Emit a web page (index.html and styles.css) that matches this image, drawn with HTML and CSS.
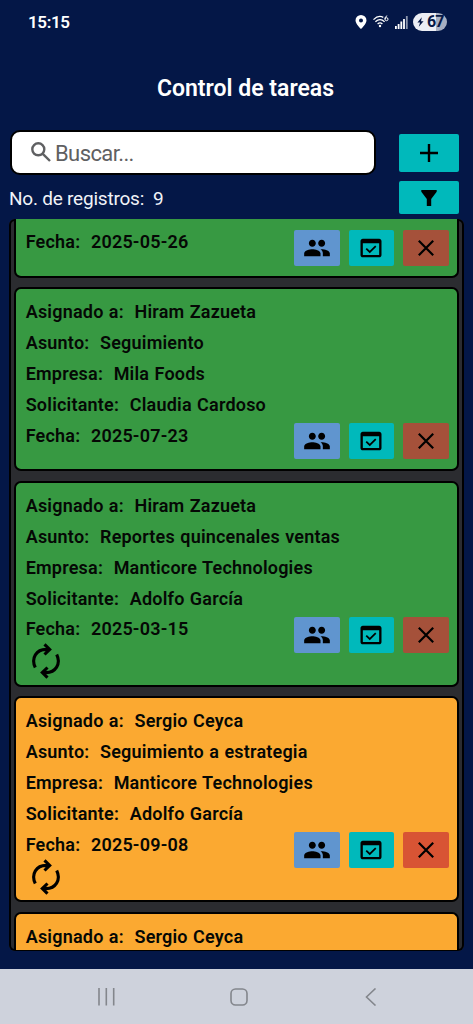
FILE: index.html
```html
<!DOCTYPE html>
<html lang="es">
<head>
<meta charset="utf-8">
<title>Control de tareas</title>
<link rel="stylesheet" href="styles.css">
</head>
<body>
<svg class="defs" width="0" height="0">
  <symbol id="people" viewBox="0 0 24 24"><path d="M16 11c1.66 0 2.99-1.34 2.99-3S17.66 5 16 5c-1.66 0-3 1.34-3 3s1.34 3 3 3zm-8 0c1.66 0 2.99-1.34 2.99-3S9.66 5 8 5C6.34 5 5 6.34 5 8s1.34 3 3 3zm0 2c-2.33 0-7 1.17-7 3.5V19h14v-2.500c0-2.330-4.670-3.500-7-3.500zm8 0c-.29 0-.62.02-.97.05 1.160.84 1.970 1.970 1.970 3.450V19h6v-2.500c0-2.330-4.670-3.500-7-3.500z"/></symbol>
  <symbol id="verify" viewBox="0 0 24 24"><path d="M16.600 10.880l-1.060-1.060-4.600 4.600-2.480-2.480L7.400 13l3.540 3.540zM19 4H5c-1.110 0-2 .9-2 2v12c0 1.100.89 2 2 2h14c1.100 0 2-.9 2-2V6c0-1.100-.89-2-2-2zm0 14H5V8h14v10z"/></symbol>
  <symbol id="close" viewBox="0 0 16 16"><path d="M.800.800l14.400 14.400M15.200.800L.800 15.200" fill="none" stroke="#000" stroke-width="2.200"/></symbol>
  <symbol id="repeat" viewBox="0 0 28 36"><g fill="none" stroke="#000" stroke-width="3.100"><path d="M3.300 24.500C-1.300 15 4.500 6.400 14 6.400H18M12.500 1.300l5.200 5.100-5.200 5.100"/><path d="M24.700 11.500C29.300 21 23.500 29.600 14 29.600H10M15.500 34.700l-5.200-5.100 5.200-5.100"/></g></symbol>
</svg>
<div class="screen">
  <header class="status">
    <span class="clock">15:15</span>
    <div class="indicators">
      <svg class="pin" viewBox="0 0 12 14"><path fill="#fff" fill-rule="evenodd" d="M6 0a5.500 5.500 0 0 0-5.500 5.500C.5 9 6 14 6 14s5.500-5 5.500-8.500A5.500 5.500 0 0 0 6 0zm0 3.400a2 2 0 1 1 0 4 2 2 0 0 1 0-4z"/></svg>
      <svg class="wifi" viewBox="0 0 16 13"><g fill="none" stroke="#fff" stroke-width="1.300"><path d="M.5 4.600Q5.500-.4 10.300 2.400M2.400 6.800Q7 2.400 11.600 6.800M4.600 9Q7 6.800 9.400 9"/><path stroke-width="1" d="M14.200.700Q11.700 1.600 11.900 4.200"/><circle stroke-width="1" cx="13.500" cy="4.200" r="1.500"/></g><circle cx="7" cy="11" r="1.200" fill="#fff"/></svg>
      <svg class="signal" viewBox="0 0 13 14"><path fill="#fff" d="M0 11h1.800v3H0zM2.700 9h1.800v5H2.700zM5.400 6.500h1.800V14H5.400zM8.100 4h1.800v10H8.100z"/><path fill="#8c95ad" d="M10.900 1h1.800v13h-1.800z"/></svg>
      <span class="battery"><svg viewBox="0 0 8 11"><path fill="#061845" d="M5.500 0L.5 6h3L2 11l5.500-6.500H4.600z"/></svg>67</span>
    </div>
  </header>
  <h1 class="title">Control de tareas</h1>
  <section class="tools">
    <div class="tools-left">
      <div class="search">
        <svg viewBox="0 0 20 20"><g fill="none" stroke="#5f6062" stroke-width="2.400"><circle cx="7.300" cy="7.300" r="6"/><path d="M11.800 11.800l7.200 7.200"/></g></svg>
        <span>Buscar...</span>
      </div>
      <p class="count">No. de registros:&nbsp; 9</p>
    </div>
    <div class="tools-right">
      <button class="tool add"><svg viewBox="0 0 18 18"><path d="M9 0v18M0 9h18" stroke="#000" stroke-width="2.400"/></svg></button>
      <button class="tool filter"><svg viewBox="0 0 16 16"><path d="M.3 0h15.400v1.800L10.200 9v7H5.800V9L.3 1.800z"/></svg></button>
    </div>
  </section>
  <main class="list">
    <article class="card green first">
      <div class="foot"><p>Fecha:&nbsp; 2025-05-26</p>
        <div class="actions"><button class="act blue"><svg><use href="#people"/></svg></button><button class="act teal"><svg><use href="#verify"/></svg></button><button class="act red"><svg><use href="#close"/></svg></button></div></div>
    </article>
    <article class="card green">
      <p>Asignado a:&nbsp; Hiram Zazueta</p>
      <p>Asunto:&nbsp; Seguimiento</p>
      <p>Empresa:&nbsp; Mila Foods</p>
      <p>Solicitante:&nbsp; Claudia Cardoso</p>
      <div class="foot"><p>Fecha:&nbsp; 2025-07-23</p>
        <div class="actions"><button class="act blue"><svg><use href="#people"/></svg></button><button class="act teal"><svg><use href="#verify"/></svg></button><button class="act red"><svg><use href="#close"/></svg></button></div></div>
    </article>
    <article class="card green tall">
      <p>Asignado a:&nbsp; Hiram Zazueta</p>
      <p>Asunto:&nbsp; Reportes quincenales ventas</p>
      <p>Empresa:&nbsp; Manticore Technologies</p>
      <p>Solicitante:&nbsp; Adolfo García</p>
      <div class="foot"><div><p>Fecha:&nbsp; 2025-03-15</p><svg class="repeat"><use href="#repeat"/></svg></div>
        <div class="actions"><button class="act blue"><svg><use href="#people"/></svg></button><button class="act teal"><svg><use href="#verify"/></svg></button><button class="act red"><svg><use href="#close"/></svg></button></div></div>
    </article>
    <article class="card orange tall">
      <p>Asignado a:&nbsp; Sergio Ceyca</p>
      <p>Asunto:&nbsp; Seguimiento a estrategia</p>
      <p>Empresa:&nbsp; Manticore Technologies</p>
      <p>Solicitante:&nbsp; Adolfo García</p>
      <div class="foot"><div><p>Fecha:&nbsp; 2025-09-08</p><svg class="repeat"><use href="#repeat"/></svg></div>
        <div class="actions"><button class="act blue"><svg><use href="#people"/></svg></button><button class="act teal"><svg><use href="#verify"/></svg></button><button class="act red"><svg><use href="#close"/></svg></button></div></div>
    </article>
    <article class="card orange last">
      <p>Asignado a:&nbsp; Sergio Ceyca</p>
    </article>
  </main>
  <nav class="navbar">
    <svg viewBox="0 0 18 18"><path d="M2 0v17.500M9.300 0v17.500M16.700 0v17.500"/></svg>
    <svg viewBox="0 0 18 18"><rect x="1" y="1" width="16" height="16" rx="4.500"/></svg>
    <svg viewBox="0 0 18 18"><path d="M13.500.5L4.500 9l9 8.500"/></svg>
  </nav>
</div>
</body>
</html>
```
FILE: styles.css
```css
* { box-sizing: border-box; }
body { margin: 0; font-family: Roboto, "Noto Sans", sans-serif; }
p, h1 { margin: 0; }
button { border: 0; padding: 0; display: flex; align-items: center; justify-content: center; }
.defs { display: block; position: absolute; }
.screen { width: 473px; height: 1024px; overflow: hidden; background: #041747; display: flex; flex-direction: column; }
.status { height: 44px; flex: none; padding: 0 26px 0 28px; display: flex; justify-content: space-between; align-items: center; color: #fff; }
.clock { font-size: 17px; font-weight: 600; line-height: 20px; letter-spacing: -0.35px; }
.indicators { display: flex; align-items: center; }
.pin { width: 12px; height: 14px; margin-right: 6px; }
.wifi { width: 16px; height: 13px; margin: 0 6px 2px 0; }
.signal { width: 13px; height: 14px; margin-right: 5px; }
.battery { width: 34px; height: 18px; border-radius: 9px; background: linear-gradient(90deg, #eceef4 67%, #a7afc2 67%); color: #061845; font-size: 16px; font-weight: 700; line-height: 18px; letter-spacing: -1px; display: flex; align-items: center; gap: 3px; padding-left: 4px; }
.battery svg { width: 7px; height: 10px; flex: none; }
.title { height: 86px; padding: 30px 0 0 18px; flex: none; text-align: center; color: #fff; font-size: 23px; line-height: 30px; font-weight: 600; }
.tools { height: 89px; flex: none; display: flex; justify-content: space-between; padding: 0 14px 0 10px; }
.tools-left { width: 366px; }
.search { height: 45px; background: #fff; border: 2px solid #000; border-radius: 10px; display: flex; align-items: center; gap: 4px; padding: 2px 0 0 19px; color: #5f6062; font-size: 22px; letter-spacing: -0.6px; }
.search svg { width: 20px; height: 20px; margin-top: -3px; }
.count { color: #f1f3f8; font-size: 19px; line-height: 26px; padding-top: 11px; letter-spacing: -0.22px; margin-left: -1px; }
.tools-right { width: 60px; padding-top: 4px; display: flex; flex-direction: column; gap: 9px; }
.tool { background: #00b9bb; border-radius: 2px; width: 60px; }
.add { height: 38px; }
.add svg { width: 18px; height: 18px; }
.filter { height: 33px; }
.filter svg { width: 16px; height: 16px; }
.list { margin: 0 9px; height: 732px; flex: none; background: #2b2c30; border-radius: 6px; box-shadow: inset 0 0 0 2px #000; padding: 0 5px; display: flex; flex-direction: column; gap: 9.500px; }
.card { flex: none; height: 184.300px; border: 2px solid #000; border-radius: 7px; padding: 8.200px 8.500px 0 9.700px; font-size: 18px; line-height: 30.850px; font-weight: 600; letter-spacing: 0.2px; word-spacing: 0.65px; color: #050805; }
.green { background: #379942; }
.orange { background: #fba931; }
.first { height: 58.500px; border-top: 0; border-radius: 0 0 7px 7px; }
.tall { height: 206px; }
.last { height: 38.500px; border-bottom: 0; border-radius: 7px 7px 0 0; }
.foot { display: flex; justify-content: space-between; align-items: flex-start; }
.actions { display: flex; gap: 9px; padding-top: 2.500px; }
.act { width: 45.500px; height: 36px; border-radius: 2px; }
.blue { background: #6095cf; }
.teal { background: #00b9bb; }
.red { background: #a5513a; }
.orange .red { background: #d85434; }
.act svg { width: 28px; height: 28px; }
.act.red svg { width: 16px; height: 16px; }
.repeat { display: block; width: 28px; height: 36px; margin: -2px 0 0 6px; }
.navbar { margin-top: 18px; height: 55px; flex: none; background: #ced2dc; display: flex; justify-content: space-between; align-items: center; padding: 0 93px 0 97px; }
.navbar svg { width: 18px; height: 18px; fill: none; stroke: #83868c; stroke-width: 1.600; }
```
